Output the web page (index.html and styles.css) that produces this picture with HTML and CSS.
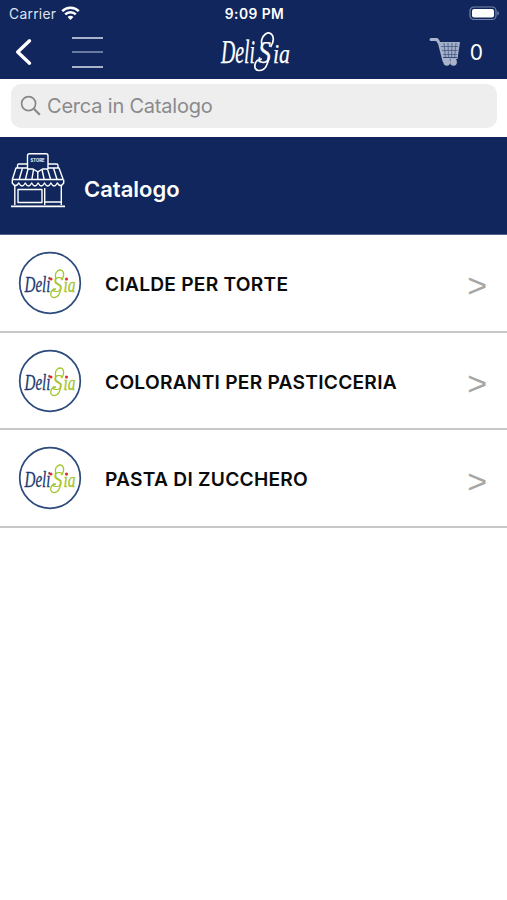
FILE: index.html
```html
<!DOCTYPE html>
<html lang="it">
<head>
<meta charset="utf-8">
<meta name="viewport" content="width=device-width, initial-scale=1">
<title>Catalogo</title>
<link rel="stylesheet" href="styles.css">
</head>
<body>
<svg class="defs" width="0" height="0" aria-hidden="true">
  <defs>
    <symbol id="badge" viewBox="0 0 64 64">
      <circle cx="32" cy="32" r="30.3" fill="#fff" stroke="#2c4a7c" stroke-width="1.7"/>
      <g class="script">
        <text x="6.500" y="41" font-size="24" textLength="26" lengthAdjust="spacingAndGlyphs" fill="#203a70" stroke="#203a70" stroke-width=".3">Deli</text>
        <text x="34.500" y="41" font-size="24" textLength="10" lengthAdjust="spacingAndGlyphs" fill="#a2c62f">S</text>
        <text x="45.500" y="41" font-size="20" textLength="12" lengthAdjust="spacingAndGlyphs" fill="#a2c62f" stroke="#a2c62f" stroke-width=".3">ia</text>
      </g>
      <path d="M44 29c4-8-.5-12-4.500-9-3 2.500-2.500 5-1.500 8M38 38c-6 0-7 8-2.500 8.500 5 .5 7-5 7-9" fill="none" stroke="#a2c62f" stroke-width="1.300"/>
      <circle cx="33" cy="28" r="1.500" fill="#e02b35"/>
      <circle cx="48.500" cy="28" r="1.500" fill="#e02b35"/>
    </symbol>
  </defs>
</svg>

<header class="top">
  <div class="status">
    <div class="carrier">
      <span>Carrier</span>
      <svg width="19" height="14" viewBox="0 0 19 14" fill="none" stroke="#fff" stroke-width="2.5">
        <path d="M1.2 5.2a11.7 11.7 0 0 1 16.6 0M4.2 8.4a7.4 7.4 0 0 1 10.6 0"/>
        <path d="M9.5 14 6.6 11.1a4 4 0 0 1 5.8 0z" fill="#fff" stroke="none"/>
      </svg>
    </div>
    <div class="time">9:09 PM</div>
    <svg class="battery" width="31" height="15" viewBox="0 0 31 15">
      <rect x="1" y="1" width="26" height="12.5" rx="3.8" fill="none" stroke="#7886a9" stroke-width="1.2"/>
      <rect x="3" y="3" width="22" height="8.6" rx="2" fill="#fff"/>
      <path d="M28.4 5c2 .8 2 3.700 0 4.500z" fill="#7886a9"/>
    </svg>
  </div>
  <nav class="nav">
    <div class="nav-left">
      <svg width="18" height="28" viewBox="0 0 18 28" fill="none" stroke="#fff" stroke-width="3.400" stroke-linecap="round" stroke-linejoin="round"><path d="M14.500 2.800 2.700 14l11.800 11.200"/></svg>
      <div class="menu"><i></i><i></i><i></i></div>
    </div>
    <svg class="brand" width="72" height="50" viewBox="0 -3 72 50">
      <g class="script" fill="#fff" stroke="#fff" stroke-width=".25">
        <text x="1" y="33" font-size="33" textLength="34" lengthAdjust="spacingAndGlyphs">Deli</text>
        <text x="38" y="33" font-size="32" textLength="13" lengthAdjust="spacingAndGlyphs">S</text>
        <text x="53" y="33" font-size="27" textLength="17" lengthAdjust="spacingAndGlyphs">ia</text>
      </g>
      <path d="M50.500 17c6-9 1-17-5-13-4 3-5 8-3 12M42 29c-8 0-9.500 11-3.500 11.500 7 .5 10-7 10-13.500" fill="none" stroke="#fff" stroke-width="1.700"/>
    </svg>
    <div class="nav-right">
      <svg width="32" height="30" viewBox="0 0 32 30">
        <path d="M2 2.500H8l2.500 4L15 24" fill="none" stroke="#aab4cb" stroke-width="3" stroke-linecap="round" stroke-linejoin="round"/>
        <path d="M9.500 5h21.500l-2.500 17-13.500 1z" fill="#a3aec7"/>
        <path d="M12 9.500h17M13 13.500h15.500M14 17.500h14M15 6l1.500 15M19 6l.5 15M23 6l-.5 15M27 6l-1.500 15" stroke="#465a88" stroke-width=".8"/>
        <path d="M14 20.500h14" stroke="#34497b" stroke-width="1"/>
        <ellipse cx="17.800" cy="25" rx="3.400" ry="3.800" fill="#aab4cb"/><ellipse cx="24.500" cy="25" rx="3.400" ry="3.800" fill="#aab4cb"/>
      </svg>
      <span class="count">0</span>
    </div>
  </nav>
</header>

<div class="search-wrap">
  <div class="search">
    <svg width="22" height="22" viewBox="0 0 22 22" fill="none" stroke="#88888a"><circle cx="8.600" cy="8.600" r="7" stroke-width="1.700"/><path d="m13.800 13.800 6 5.900" stroke-width="2.200"/></svg>
    <span>Cerca in Catalogo</span>
  </div>
</div>

<section class="section-head">
  <svg width="56" height="58" viewBox="0 0 56 58" fill="none" stroke="#fff" stroke-width="1.400" stroke-linejoin="round">
    <path d="M17.500 17V3.800q0-2 2-2h16.500q2 0 2 2V17M17.500 17h5.500l4.800 2.800 4.700-2.800H38"/>
    <text x="20.500" y="10.300" font-size="4.800" textLength="14" lengthAdjust="spacingAndGlyphs" class="sign">STORE</text>
    <path d="M17.500 12H9q-1.500 0-1.500 1.500V16M38 12h8.500q1.500 0 1.500 1.500V16M17.500 16H6L2.300 27.500M38 16h11l4.200 11.500M2.300 27.500h51"/>
    <path d="M12.500 16 9 28M18 17l-2.700 11M23.500 17.500l-1.700 10.500M27.800 20v8M32 17.500l2.300 10.500M37.500 17l3.300 11M43.500 16l3.700 12"/>
    <path d="M2.300 27.500V31q3.200 5 6.500 0 3.200 6 6.500 0 3.200 6 6.400 0 3.200 6 6.400 0 3.200 6 6.400 0 3.200 6 6.400 0 3.200 6 6.400 0 3.200 5 6.400 0V27.500"/>
    <path d="M4.800 34V53M51.300 34V53M8 37.500h24V50.500H8zM34.700 36v17M35 50h16"/>
    <path d="M1 54.300h54" stroke-width="1.800"/>
  </svg>
  <h1>Catalogo</h1>
</section>

<main>
  <div class="row">
    <svg class="logo" width="64" height="64"><use href="#badge"/></svg>
    <span class="label">CIALDE PER TORTE</span>
    <span class="chev">&gt;</span>
  </div>
  <div class="row">
    <svg class="logo" width="64" height="64"><use href="#badge"/></svg>
    <span class="label">COLORANTI PER PASTICCERIA</span>
    <span class="chev">&gt;</span>
  </div>
  <div class="row">
    <svg class="logo" width="64" height="64"><use href="#badge"/></svg>
    <span class="label">PASTA DI ZUCCHERO</span>
    <span class="chev">&gt;</span>
  </div>
</main>
</body>
</html>
```
FILE: styles.css
```css
* { box-sizing: border-box; }
body { margin: 0; background: #fff; font-family: Inter, "Liberation Sans", sans-serif; color: #0b0b0b; }
svg { display: block; flex: none; }
.defs { position: absolute; }
.script { font-family: "Liberation Serif", serif; font-style: italic; }

.top { height: 79px; background: #10265c; color: #fff; }
.status { height: 27px; display: grid; grid-template-columns: 1fr auto 1fr; align-items: center; padding: 0 7px 0 9px; }
.carrier { display: flex; align-items: center; gap: 5px; font-size: 13.8px; color: #dfe3ee; letter-spacing: .3px; }
.carrier svg { margin-top: -2px; }
.time { font-size: 13.8px; font-weight: 600; letter-spacing: .45px; }
.battery { justify-self: end; }
.nav { height: 50px; display: grid; grid-template-columns: 1fr auto 1fr; align-items: center; padding: 0 24px 0 15px; }
.nav-left { display: flex; align-items: center; gap: 39px; }
.menu { width: 31px; display: flex; flex-direction: column; gap: 12.500px; }
.menu i { height: 2px; background: #a9b3ca; }
.menu i:nth-child(2) { background: #6a7a9f; }
.brand { overflow: visible; margin-left: 13px; }
.nav-right { display: flex; align-items: center; justify-content: flex-end; gap: 9px; }
.count { font-size: 21px; line-height: 30px; padding-top: 1px; }

.search-wrap { height: 57.500px; padding: 5px 10px 8px 11px; }
.search { height: 43.500px; border-radius: 10px; background: #eee; display: flex; align-items: center; gap: 5px; padding-left: 9px; color: #8a8a8d; font-size: 20px; letter-spacing: -.2px; }

.section-head { height: 98.500px; background: #10265c; border-bottom: 1px solid #53648c; color: #fff; display: flex; align-items: flex-start; padding: 15px 0 0 10px; }
.section-head h1 { margin: 24px 0 0 18px; font-size: 22px; line-height: 26px; font-weight: 600; }
.sign { font-family: Inter, sans-serif; font-weight: 700; fill: #fff; stroke: none; }

.row { height: 97.700px; border-bottom: 2px solid #c8c8ca; display: flex; align-items: center; padding: 0 20px 0 18px; }
.label { margin-left: 23px; font-size: 19.200px; font-weight: 600; letter-spacing: .24px; white-space: nowrap; padding-top: 2px; }
.chev { margin-left: auto; font-family: "Liberation Sans", sans-serif; font-size: 34px; color: #a6a6a6; line-height: 36px; padding-top: 5px; }
```
